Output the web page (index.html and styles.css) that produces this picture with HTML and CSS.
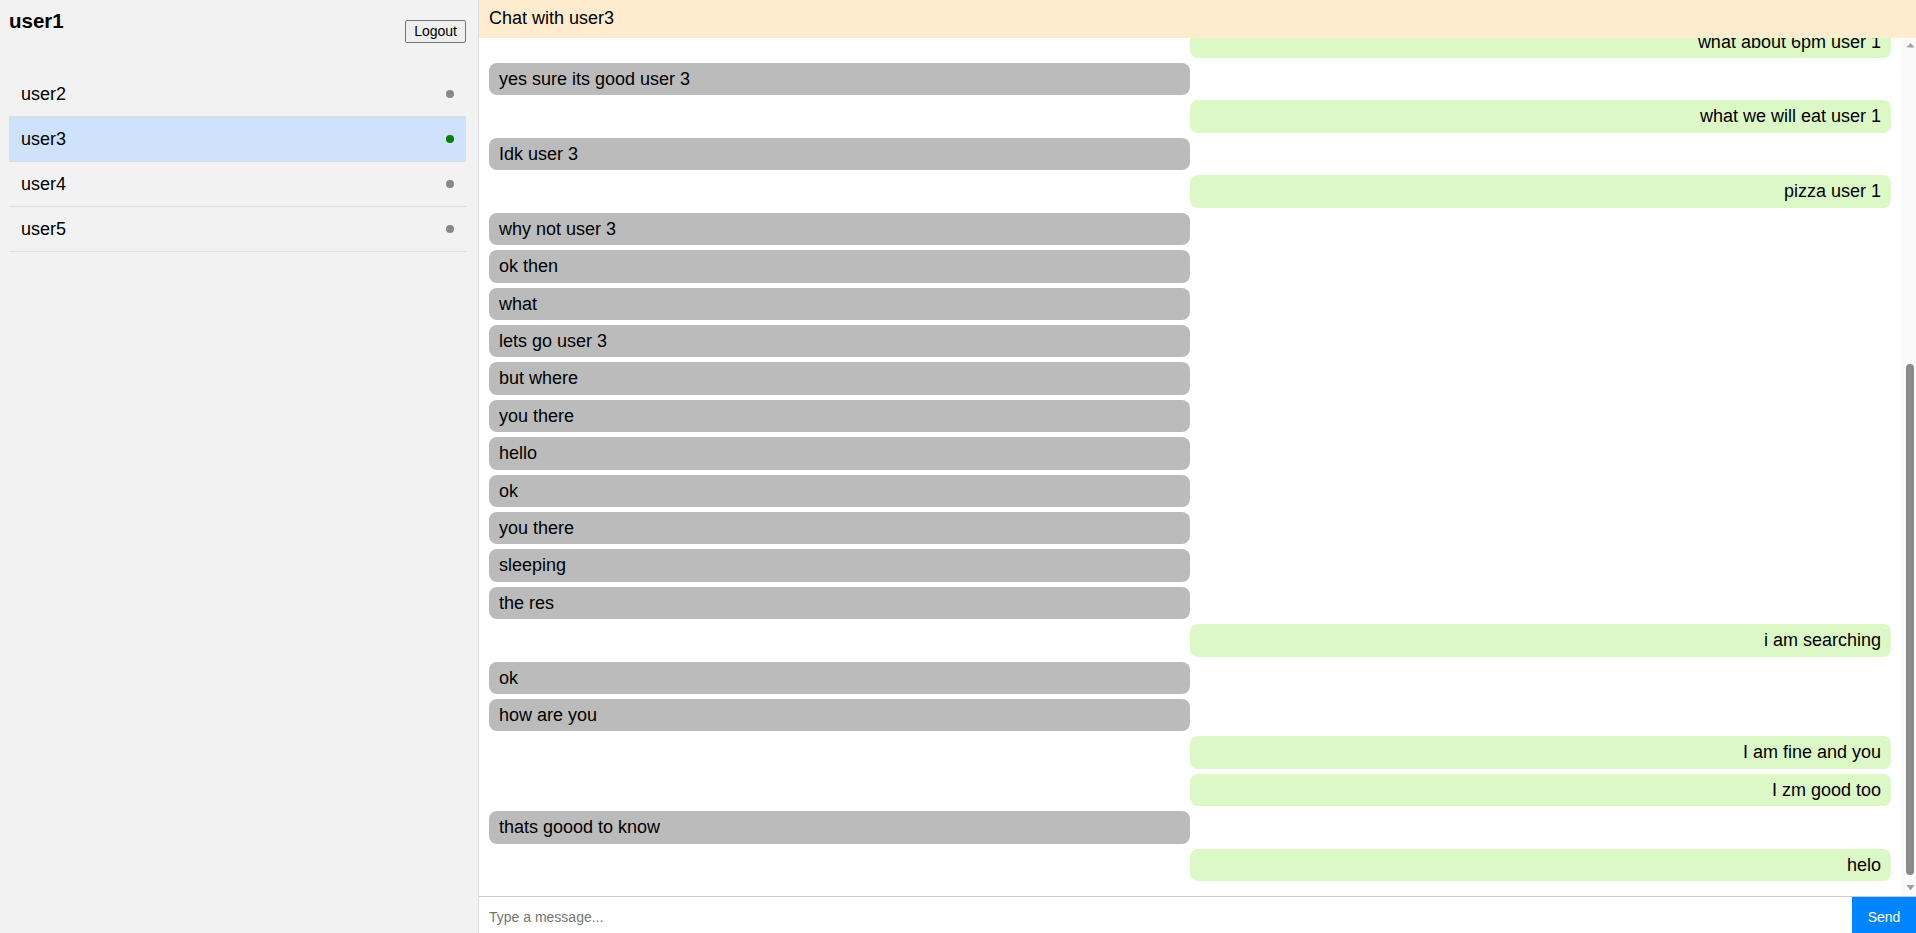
FILE: index.html
```html
<!DOCTYPE html>
<html lang="en">
<head>
<meta charset="utf-8">
<title>Chat</title>
<link rel="stylesheet" href="styles.css">
</head>
<body>
<div class="app">
  <aside class="sidebar">
    <div class="sidebar-header">
      <h3 class="me">user1</h3>
      <button class="logout">Logout</button>
    </div>
    <ul class="users">
      <li class="user"><span>user2</span><span class="dot"></span></li>
      <li class="user active"><span>user3</span><span class="dot online"></span></li>
      <li class="user"><span>user4</span><span class="dot"></span></li>
      <li class="user"><span>user5</span><span class="dot"></span></li>
    </ul>
  </aside>
  <main class="chat">
    <div class="chat-header">Chat with user3</div>
    <div class="messages-wrap">
      <div class="messages">
        <div class="messages-inner">
          <div class="msg theirs">hi user 1</div>
          <div class="msg mine">hello user 3</div>
          <div class="msg theirs">how are you user 1</div>
          <div class="msg mine">i am good user 3</div>
          <div class="msg theirs">what are you doing</div>
          <div class="msg mine">nothing much user 3</div>
          <div class="msg theirs">lets meet today</div>
          <div class="msg mine">sure user 3</div>
          <div class="msg theirs">where</div>
          <div class="msg mine">at the cafe user 3</div>
          <div class="msg theirs">ok user 1</div>
          <div class="msg mine">when user 3</div>
          <div class="msg theirs">in the evening</div>
          <div class="msg mine">ok</div>
          <div class="msg theirs">fine user 1</div>
          <div class="msg mine">what about 6pm user 1</div>
          <div class="msg theirs">yes sure its good user 3</div>
          <div class="msg mine">what we will eat user 1</div>
          <div class="msg theirs">Idk user 3</div>
          <div class="msg mine">pizza user 1</div>
          <div class="msg theirs">why not user 3</div>
          <div class="msg theirs">ok then</div>
          <div class="msg theirs">what</div>
          <div class="msg theirs">lets go user 3</div>
          <div class="msg theirs">but where</div>
          <div class="msg theirs">you there</div>
          <div class="msg theirs">hello</div>
          <div class="msg theirs">ok</div>
          <div class="msg theirs">you there</div>
          <div class="msg theirs">sleeping</div>
          <div class="msg theirs">the res</div>
          <div class="msg mine">i am searching</div>
          <div class="msg theirs">ok</div>
          <div class="msg theirs">how are you</div>
          <div class="msg mine">I am fine and you</div>
          <div class="msg mine">I zm good too</div>
          <div class="msg theirs">thats goood to know</div>
          <div class="msg mine">helo</div>
        </div>
      </div>
      <div class="scrollbar" aria-hidden="true">
        <svg class="arrow" width="9" height="15" viewBox="0 0 9 15"><polygon points="0.5,9.5 8.5,9.5 4.5,5" fill="#a0a0a0"/></svg>
        <div class="thumb"></div>
        <svg class="arrow" width="9" height="15" viewBox="0 0 9 15"><polygon points="0.5,4 8.5,4 4.5,9.5" fill="#a0a0a0"/></svg>
      </div>
    </div>
    <form class="composer">
      <input class="composer-input" type="text" placeholder="Type a message...">
      <button class="send" type="button">Send</button>
    </form>
  </main>
</div>
</body>
</html>
```

FILE: styles.css
```css
* { box-sizing: border-box; }

html, body {
  margin: 0;
  padding: 0;
  height: 100%;
}

body {
  font-family: "Liberation Sans", Arial, sans-serif;
  font-size: 18px;
  color: #000;
  background: #fff;
  overflow: hidden;
}

.app {
  display: flex;
  height: 100vh;
}

.sidebar {
  flex: 0 0 479px;
  background: #f2f2f2;
  border-right: 1px solid #dcdcdc;
  padding: 9px 12px 9px 9px;
}

.sidebar-header {
  display: flex;
  justify-content: space-between;
  align-items: flex-start;
  margin-bottom: 29px;
}

.me {
  margin: 0;
  font-size: 20.5px;
  font-weight: bold;
  line-height: 24px;
}

.logout {
  margin-top: 11px;
  font-family: "Liberation Sans", Arial, sans-serif;
  font-size: 14px;
  line-height: 17px;
  padding: 2px 8px;
  background: #efefef;
  border: 1px solid #767676;
  border-radius: 2px;
  color: #000;
}

.users {
  list-style: none;
  margin: 0;
  padding: 0;
}

.user {
  display: flex;
  justify-content: space-between;
  align-items: center;
  padding: 12px;
  line-height: 20px;
  border-bottom: 1px solid #dddddd;
}

.user.active {
  background: #cfe2fc;
}

.dot {
  width: 8px;
  height: 8px;
  border-radius: 50%;
  background: #888888;
}

.dot.online {
  background: #008000;
}

.chat {
  flex: 1;
  display: flex;
  flex-direction: column;
  min-width: 0;
}

.chat-header {
  background: #ffebcd;
  padding: 8px 10px 9px;
  line-height: 21px;
  height: 38px;
}

.messages-wrap {
  flex: 1;
  min-height: 0;
  display: flex;
}

.messages {
  flex: 1;
  min-width: 0;
  overflow-y: auto;
  scrollbar-width: none;
  display: flex;
  flex-direction: column-reverse;
  padding: 10px;
}

.messages::-webkit-scrollbar {
  display: none;
}

.messages-inner {
  display: flex;
  flex-direction: column;
}

.msg {
  width: 50%;
  padding: 6px 10px;
  line-height: 20.4px;
  border-radius: 8px;
  margin-bottom: 5px;
}

.msg.theirs {
  background: #bbbbbb;
  align-self: flex-start;
}

.msg.mine {
  background: #dcf8c6;
  align-self: flex-end;
  text-align: right;
}

.scrollbar {
  flex: 0 0 15px;
  display: flex;
  flex-direction: column;
  background: #fafafa;
  padding-left: 5px;
}

.arrow {
  display: block;
  flex: 0 0 15px;
}

.thumb {
  width: 8px;
  height: 511px;
  margin-top: auto;
  margin-bottom: 6px;
  border-radius: 4px;
  background: #8b8b8b;
}

.composer {
  display: flex;
  margin: 0;
  border-top: 1px solid #cccccc;
  height: 37px;
}

.composer-input {
  flex: 1;
  border: none;
  outline: none;
  padding: 3px 10px 0;
  font-family: "Liberation Sans", Arial, sans-serif;
  font-size: 14px;
  height: 36px;
}

.composer-input::placeholder {
  color: #757575;
}

.send {
  width: 64px;
  height: 36px;
  border: none;
  background: #0084ff;
  color: #fff;
  font-family: "Liberation Sans", Arial, sans-serif;
  font-size: 14px;
  padding: 3px 0 0;
}
```
